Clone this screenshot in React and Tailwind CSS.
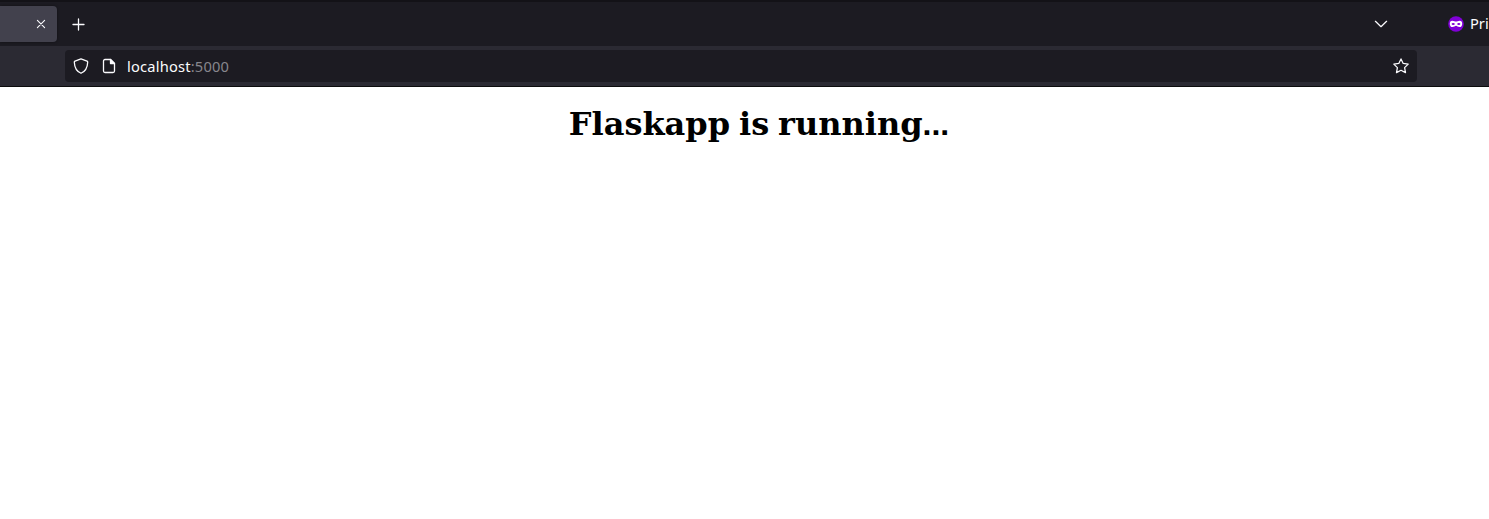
const stroke = {
  fill: 'none',
  stroke: '#fbfbfe',
  strokeLinecap: 'round',
  strokeLinejoin: 'round',
};

function TabStrip() {
  return (
    <div className="flex h-[46px] items-center border-t-2 border-[#131217] bg-[#1c1b22]">
      <div className="flex h-9 w-[57px] items-center justify-end rounded-r-[4px] bg-[#42414d] pr-2 shadow-[0_0_3px_rgba(0,0,0,0.45)]">
        <svg className="size-4" viewBox="0 0 16 16" {...stroke} strokeWidth="1.1">
          <path d="M4.4 4.4l7.2 7.2M11.6 4.4l-7.2 7.2" />
        </svg>
      </div>
      <svg className="ml-[13px] size-4" viewBox="0 0 16 16" {...stroke} strokeWidth="1.3">
        <path d="M8.5 3v11M3 8.5h11" />
      </svg>
      <svg className="ml-auto size-4" viewBox="0 0 16 16" {...stroke} strokeWidth="1.25">
        <path d="M2.4 5.3L8 10.7l5.6-5.4" />
      </svg>
      <svg className="ml-[59px] size-4 shrink-0" viewBox="0 0 16 16">
        <circle cx="8" cy="8" r="7.8" fill="#8000d7" />
        <path
          fill="#fff"
          d="M4.3 4.800C6 4.800 7 5.600 8 5.600S10 4.800 11.700 4.800C13.400 4.800 14.200 6 14.200 7.700c0 1.900-1 3.400-2.700 3.400-1.600 0-2.500-1.300-3.500-1.300s-1.900 1.300-3.500 1.300c-1.700 0-2.700-1.500-2.700-3.400C1.800 6 2.600 4.800 4.300 4.800z"
        />
        <ellipse cx="5.200" cy="8" rx="1.600" ry=".95" fill="#8000d7" />
        <ellipse cx="10.800" cy="8" rx="1.600" ry=".95" fill="#8000d7" />
      </svg>
      <span className="ml-1.5 w-[19px] -translate-y-px overflow-hidden whitespace-nowrap text-[14.67px] leading-5 text-[#fbfbfe]">
        Pri
      </span>
    </div>
  );
}

function AddressBar() {
  return (
    <div className="flex h-[41px] border-b border-[#0c0c0d] bg-[#2b2a33] pt-1 pr-[72px] pb-1 pl-[65px]">
      <div className="flex h-8 w-full items-center rounded-[4px] bg-[#1c1b22] px-2">
        <svg className="size-4" viewBox="0 0 16 16" {...stroke} strokeWidth="1.25">
          <path d="M8 .8l6 2.3c.5.2.7.5.7 1C14.500 9 12.800 13.200 8 15.300 3.200 13.200 1.500 9 1.300 4.100c0-.5.200-.8.700-1z" />
        </svg>
        <svg className="ml-3 size-4" viewBox="0 0 16 16" {...stroke} strokeWidth="1.3">
          <path d="M9.500 1.500H4a1.500 1.500 0 0 0-1.500 1.500v10A1.500 1.500 0 0 0 4 14.500h8a1.500 1.500 0 0 0 1.500-1.500V5.500z" />
          <path d="M9.500 1.500v4h4z" fill="#fbfbfe" />
        </svg>
        <span className="ml-[10px] whitespace-nowrap text-[14.67px] leading-5 tracking-[0.2px] text-[#fbfbfe]">
          localhost<span className="text-[#87868d]">:5000</span>
        </span>
        <svg className="ml-auto size-4" viewBox="0 0 16 16" {...stroke} strokeWidth="1.25">
          <path d="M8 .9l2.200 4.500 5 .7-3.600 3.500.9 5L8 12.300l-4.500 2.300.9-5L.8 6.100l5-.7z" />
        </svg>
      </div>
    </div>
  );
}

export default function App() {
  return (
    <div className="flex h-[519px] w-[1489px] flex-col overflow-hidden bg-white font-['Noto_Sans',sans-serif]">
      <TabStrip />
      <AddressBar />
      <main className="flex-1 pt-[18px] pl-[29px]">
        <h1 className="text-center font-['DejaVu_Serif',serif] text-[32px] leading-[38px] font-bold text-black [word-spacing:-2.2px]">
          Flaskapp is running
          <span className="font-['Liberation_Sans',sans-serif]">...</span>
        </h1>
      </main>
    </div>
  );
}
